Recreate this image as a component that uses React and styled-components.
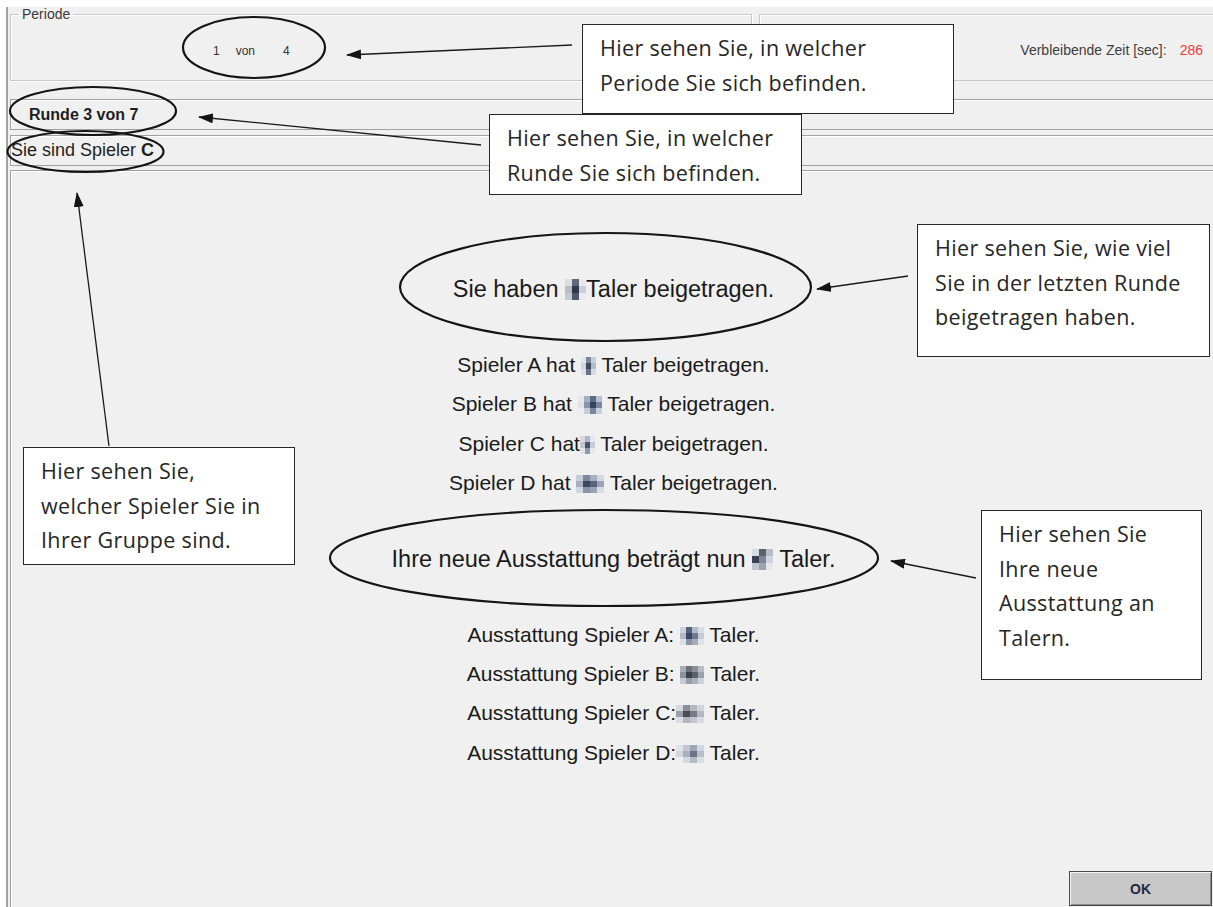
import styled, { createGlobalStyle } from "styled-components";

const GlobalStyle = createGlobalStyle`
  html, body {
    margin: 0;
    padding: 0;
    background: #ffffff;
    overflow: hidden;
  }
  body {
    font-family: "Liberation Sans", Arial, sans-serif;
  }
`;

const Page = styled.div`
  position: relative;
  width: 1213px;
  height: 907px;
  padding-top: 7px;
  box-sizing: border-box;
  overflow: hidden;
`;

const Window = styled.div`
  margin-left: 6px;
  width: 1210px;
  height: 900px;
  box-sizing: border-box;
  border-left: 2px solid #a3a3a3;
  padding-left: 2px;
  background: #f0f0f0;
  display: flex;
  flex-direction: column;
`;

const TopRow = styled.div`
  display: flex;
  gap: 7px;
  height: 74px;
  flex-shrink: 0;
`;

const GroupBox = styled.fieldset`
  margin: 0;
  padding: 0;
  width: 742px;
  height: 74px;
  box-sizing: border-box;
  border: 1px solid #c9c9c9;
  box-shadow: inset 1px 1px 0 #ffffff, 1px 1px 0 #ffffff;
  display: flex;
  align-items: center;
`;

const Legend = styled.legend`
  margin-left: 8px;
  padding: 0 3px;
  font-size: 14px;
  line-height: 14px;
  color: #3a3a3a;
`;

const PeriodRow = styled.div`
  display: flex;
  align-items: baseline;
  margin-left: 202px;
  font-size: 12px;
  color: #333333;
`;

const PeriodValue = styled.span`
  margin-left: ${(p) => p.$gap || 0}px;
`;

const StatusPanel = styled.div`
  flex: 1;
  margin-top: 7px;
  height: 67px;
  box-sizing: border-box;
  border: 1px solid #c9c9c9;
  border-right: none;
  box-shadow: inset 1px 1px 0 #ffffff;
  display: flex;
  align-items: center;
  justify-content: flex-end;
  gap: 13px;
  padding: 5px 13px 0 0;
  font-size: 14px;
  color: #3d3d3d;
`;

const TimeLeft = styled.span`
  color: #f23a3a;
`;

const InfoRow = styled.div`
  flex-shrink: 0;
  height: 31px;
  margin-top: ${(p) => p.$top}px;
  box-sizing: border-box;
  border: 1px solid #a0a0a0;
  border-right: none;
  box-shadow: inset 1px 1px 0 #ffffff;
  display: flex;
  align-items: center;
  padding-left: ${(p) => p.$indent || 0}px;
  font-size: ${(p) => p.$size}px;
  font-weight: ${(p) => (p.$bold ? 700 : 400)};
  color: #1e1e1e;
`;

const MainPanel = styled.div`
  flex: 1;
  margin-top: 4px;
  box-sizing: border-box;
  border-top: 1px solid #a0a0a0;
  border-left: 1px solid #a0a0a0;
  box-shadow: inset 1px 1px 0 #ffffff;
  display: flex;
  flex-direction: column;
  align-items: center;
  padding-top: 98px;
`;

const BigLine = styled.div`
  font-size: 23.5px;
  line-height: 40px;
  height: 40px;
  margin: 36px 0;
  color: #1a1a1a;
  white-space: pre;
  &:first-child {
    margin-top: 0;
  }
`;

const Line = styled.div`
  font-size: 21px;
  line-height: 39.4px;
  height: 39.4px;
  color: #1a1a1a;
  white-space: pre;
`;

const Mosaic = styled.span`
  display: inline-block;
  overflow: hidden;
  vertical-align: -3px;
`;

const MosaicGrid = styled.span`
  display: grid;
  grid-template-columns: repeat(${(p) => p.$cols}, ${(p) => p.$cw}px);
  grid-auto-rows: ${(p) => p.$ch}px;
`;

const MosaicCell = styled.span`
  background: ${(p) => p.$c};
`;

const Footer = styled.div`
  margin-top: auto;
  align-self: stretch;
  display: flex;
  justify-content: flex-end;
  padding: 0 4px 1px 0;
`;

const OkButton = styled.button`
  width: 143px;
  height: 35px;
  box-sizing: border-box;
  background: #c8c8c8;
  border: 1px solid #4a4a4a;
  box-shadow: inset 1px 1px 0 #f4f4f4, inset -1px -1px 0 #8c8c8c;
  font-family: "Liberation Sans", Arial, sans-serif;
  font-size: 14px;
  font-weight: 700;
  color: #1f2a44;
  padding: 0;
`;

const Overlay = styled.svg`
  position: absolute;
  left: 0;
  top: 0;
  pointer-events: none;
`;

const Callout = styled.div`
  position: absolute;
  left: ${(p) => p.$x}px;
  top: ${(p) => p.$y}px;
  width: ${(p) => p.$w}px;
  height: ${(p) => p.$h}px;
  box-sizing: border-box;
  background: #ffffff;
  border: 1.5px solid #262626;
  padding: 6px 2px 0 17px;
  font-family: "Open Sans", "Noto Sans", sans-serif;
  font-size: 21.5px;
  letter-spacing: 0.35px;
  line-height: 34.5px;
  color: #262626;
  white-space: nowrap;
`;

const blobs = {
  own: {
    w: 7,
    h: 7,
    cells: [
      ["#dcdee4", "#5d6878", "#e6e9f0"],
      ["#b9bdc6", "#2f3a48", "#c9d0dc"],
      ["#c6c9d0", "#4d5868", "#e8eaee"],
    ],
  },
  a: {
    w: 5,
    h: 6,
    cells: [
      ["#e2e5ec", "#7d879a", "#c8cedb"],
      ["#d0d4de", "#3f4b62", "#b4bccb"],
      ["#dde1e9", "#66718a", "#d6dae3"],
    ],
  },
  b: {
    w: 6,
    h: 6,
    cells: [
      ["#e6e8ee", "#a7b0c0", "#5d6a84", "#b8c0d0"],
      ["#dfe2e9", "#8a95aa", "#34445f", "#7886a0"],
      ["#eceef2", "#c6ccd8", "#7a869c", "#c8ceda"],
    ],
  },
  c: {
    w: 5,
    h: 6,
    cells: [
      ["#d6dae2", "#b0b8c6", "#e2e5ec"],
      ["#c2c8d2", "#48546c", "#c6ccd6"],
      ["#e0e3ea", "#8e98aa", "#e6e8ee"],
    ],
  },
  d: {
    w: 7,
    h: 6,
    cells: [
      ["#c6ccd8", "#7c889e", "#a6afc0", "#d2d7e0"],
      ["#a8b0c0", "#3c4860", "#58647c", "#9aa4b6"],
      ["#d2d6de", "#8a94a8", "#9aa2b2", "#d8dce4"],
    ],
  },
  neu: {
    w: 7,
    h: 7,
    cells: [
      ["#d8dbe2", "#5a6272", "#b8bcc6"],
      ["#3a4252", "#7d8696", "#cfd3db"],
      ["#c0c4cc", "#9ca2ae", "#e4e6ea"],
    ],
  },
  ea: {
    w: 6,
    h: 6,
    cells: [
      ["#cdd2dc", "#56627a", "#b2b9c8", "#d8dce4"],
      ["#b0b8c6", "#3c4660", "#6e788e", "#c6ccd6"],
      ["#dadee6", "#8a93a6", "#a4acbc", "#e0e3ea"],
    ],
  },
  eb: {
    w: 6,
    h: 6,
    cells: [
      ["#a8adb8", "#6c707c", "#8a8f9a", "#b8bcc6"],
      ["#8e929c", "#3e424e", "#5c606c", "#9ca0aa"],
      ["#c6c9d0", "#9a9ea8", "#acb0ba", "#cfd2d8"],
    ],
  },
  ec: {
    w: 7,
    h: 6,
    cells: [
      ["#d6d8de", "#8a8e98", "#b4b8c2", "#d2d5dc"],
      ["#9a9ea8", "#4a4e5a", "#767a86", "#b4b8c0"],
      ["#dcdee4", "#b2b6be", "#c4c7ce", "#dadce2"],
    ],
  },
  ed: {
    w: 7,
    h: 6,
    cells: [
      ["#e2e4ea", "#c2c6d0", "#9ea6b6", "#d2d6de"],
      ["#d4d7de", "#aab0bc", "#6a7488", "#b8bec8"],
      ["#eceef2", "#d6d9e0", "#b4bac6", "#dadde4"],
    ],
  },
};

function Blob({ name }) {
  const { w, h, cells } = blobs[name];
  return (
    <Mosaic>
      <MosaicGrid $cols={cells[0].length} $cw={w} $ch={h}>
        {cells.flat().map((c, i) => (
          <MosaicCell key={i} $c={c} />
        ))}
      </MosaicGrid>
    </Mosaic>
  );
}

function Annotations() {
  return (
    <Overlay width="1213" height="907" viewBox="0 0 1213 907">
      <defs>
        <marker
          id="head"
          markerUnits="userSpaceOnUse"
          markerWidth="15"
          markerHeight="10"
          refX="14"
          refY="5"
          orient="auto"
        >
          <path d="M0,0 L15,5 L0,10 z" fill="#141414" />
        </marker>
      </defs>
      <g fill="none" stroke="#141414" strokeWidth="2.2">
        <ellipse cx="254" cy="47.5" rx="71" ry="30.5" />
        <ellipse cx="93" cy="111" rx="83" ry="24" />
        <ellipse cx="85.5" cy="151.5" rx="78" ry="20.5" />
        <ellipse cx="605.5" cy="287" rx="205.5" ry="54" />
        <ellipse cx="604" cy="558" rx="274" ry="48" />
      </g>
      <g stroke="#1a1a1a" strokeWidth="1.3" markerEnd="url(#head)">
        <line x1="572" y1="45" x2="347" y2="55" />
        <line x1="481" y1="145" x2="199" y2="117" />
        <line x1="109" y1="446" x2="77" y2="193" />
        <line x1="908" y1="276" x2="817" y2="289" />
        <line x1="976" y1="578" x2="891" y2="561" />
      </g>
    </Overlay>
  );
}

export default function App() {
  return (
    <>
      <GlobalStyle />
      <Page>
        <Window>
          <TopRow>
            <GroupBox>
              <Legend>Periode</Legend>
              <PeriodRow>
                <PeriodValue>1</PeriodValue>
                <PeriodValue $gap={16}>von</PeriodValue>
                <PeriodValue $gap={28}>4</PeriodValue>
              </PeriodRow>
            </GroupBox>
            <StatusPanel>
              <span>Verbleibende Zeit [sec]:</span>
              <TimeLeft>286</TimeLeft>
            </StatusPanel>
          </TopRow>
          <InfoRow $top={18} $indent={18} $size={16} $bold>
            Runde 3 von 7
          </InfoRow>
          <InfoRow $top={5} $size={18}>
            Sie sind Spieler&nbsp;<b>C</b>
          </InfoRow>
          <MainPanel>
            <BigLine>
              Sie haben <Blob name="own" />Taler beigetragen.
            </BigLine>
            <Line>
              Spieler A hat <Blob name="a" /> Taler beigetragen.
            </Line>
            <Line>
              Spieler B hat <Blob name="b" /> Taler beigetragen.
            </Line>
            <Line>
              Spieler C hat<Blob name="c" /> Taler beigetragen.
            </Line>
            <Line>
              Spieler D hat <Blob name="d" /> Taler beigetragen.
            </Line>
            <BigLine>
              Ihre neue Ausstattung beträgt nun <Blob name="neu" /> Taler.
            </BigLine>
            <Line>
              Ausstattung Spieler A: <Blob name="ea" /> Taler.
            </Line>
            <Line>
              Ausstattung Spieler B: <Blob name="eb" /> Taler.
            </Line>
            <Line>
              Ausstattung Spieler C:<Blob name="ec" /> Taler.
            </Line>
            <Line>
              Ausstattung Spieler D:<Blob name="ed" /> Taler.
            </Line>
            <Footer>
              <OkButton>OK</OkButton>
            </Footer>
          </MainPanel>
        </Window>
        <Annotations />
        <Callout $x={582} $y={24} $w={372} $h={90}>
          Hier sehen Sie, in welcher
          <br />
          Periode Sie sich befinden.
        </Callout>
        <Callout $x={489} $y={114} $w={313} $h={81}>
          Hier sehen Sie, in welcher
          <br />
          Runde Sie sich befinden.
        </Callout>
        <Callout $x={917} $y={224} $w={293} $h={133}>
          Hier sehen Sie, wie viel
          <br />
          Sie in der letzten Runde
          <br />
          beigetragen haben.
        </Callout>
        <Callout $x={23} $y={447} $w={272} $h={118}>
          Hier sehen Sie,
          <br />
          welcher Spieler Sie in
          <br />
          Ihrer Gruppe sind.
        </Callout>
        <Callout $x={981} $y={510} $w={221} $h={170}>
          Hier sehen Sie
          <br />
          Ihre neue
          <br />
          Ausstattung an
          <br />
          Talern.
        </Callout>
      </Page>
    </>
  );
}
